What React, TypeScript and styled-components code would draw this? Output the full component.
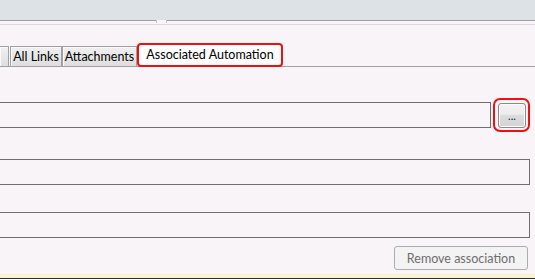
import styled, { createGlobalStyle } from "styled-components"

const GlobalStyle = createGlobalStyle`
  html, body {
    margin: 0;
    padding: 0;
  }
  body {
    background: #f8f4f7;
    font-family: Lato, "Liberation Sans", sans-serif;
    font-size: 12.5px;
    color: #000;
  }
`

const Page = styled.div`
  height: 279px;
  display: flex;
  flex-direction: column;
  overflow: hidden;
`

const TitleBand = styled.div`
  position: relative;
  height: 20px;
  flex-shrink: 0;
  background: #dce2e6;
  border-bottom: 1px solid #a0a0a0;
`

// little splitter notch that breaks the line under the title band
const Grip = styled.div`
  position: absolute;
  left: 156px;
  top: 20px;
  width: 9px;
  height: 3px;
  background: #f8f4f7;
  border-left: 1px solid #c4c4c8;
  border-right: 1px solid #c4c4c8;
`

const Rule = styled.div`
  height: 1px;
  flex-shrink: 0;
  margin-top: 3px;
  background: #d9d8dc;
`

const TabRow = styled.div`
  height: 41px;
  flex-shrink: 0;
  display: flex;
  align-items: flex-end;
  border-bottom: 1px solid #a0a0a0;
`

const Tab = styled.div<{ $w: number; $active?: boolean; $gap?: number; $clipped?: boolean }>`
  box-sizing: border-box;
  width: ${(p) => p.$w}px;
  margin-left: ${(p) => p.$gap ?? 0}px;
  display: flex;
  align-items: center;
  justify-content: center;
  white-space: nowrap;
  overflow: hidden;
  ${(p) =>
    p.$active
      ? `
    height: 24px;
    margin-bottom: -1px;
    background: #fdfdfd;
    border: 2px solid #ee1111;
    border-radius: 4px;
    padding-bottom: 2px;
  `
      : `
    height: 20px;
    background: linear-gradient(#f0f0f0, #dedede);
    border: 1px solid #a0a0a0;
    border-bottom: none;
    box-shadow: inset 1px 1px 0 #fafafa;
  `}
  ${(p) => (p.$clipped ? "border-left: none;" : "")}
`

const Form = styled.div`
  display: flex;
  flex-direction: column;
  padding-right: 5px;
`

const FieldRow = styled.div<{ $top: number }>`
  display: flex;
  align-items: center;
  margin-top: ${(p) => p.$top}px;
`

const TextBox = styled.div`
  flex: 1;
  box-sizing: border-box;
  height: 26px;
  border: 1px solid #6e6e6e;
  border-left: none;
`

const Highlight = styled.div`
  margin-left: 2px;
  box-sizing: border-box;
  width: 37px;
  height: 34px;
  padding: 3px 2px 2px 3px;
  border: 2px solid #ee1111;
  border-radius: 7px;
`

const BrowseButton = styled.div`
  box-sizing: border-box;
  width: 28px;
  height: 25px;
  border: 1px solid #8a8a8a;
  border-radius: 3px;
  background: linear-gradient(#f3f3f3 0%, #ececec 45%, #dcdcdc 50%, #d4d4d4 100%);
  box-shadow: inset 0 0 0 1px #fbfbfb;
  display: flex;
  align-items: center;
  justify-content: center;
  font-size: 11px;
  line-height: 1;
  padding-bottom: 1px;
  color: #202040;
`

const Actions = styled.div`
  display: flex;
  justify-content: flex-end;
  margin-top: 8px;
  padding-right: 2px;
`

const Button = styled.div`
  box-sizing: border-box;
  width: 134px;
  height: 24px;
  border: 1px solid #adadad;
  border-radius: 3px;
  background: #f4f3f4;
  color: #6d6d6d;
  display: flex;
  align-items: center;
  justify-content: center;
`

const Footer = styled.div`
  margin-top: auto;
  flex-shrink: 0;
  height: 4px;
  background: #fdf2cd;
  border-bottom: 1px solid #1c2d4b;
`

export default function App() {
  return (
    <Page>
      <GlobalStyle />
      <TitleBand>
        <Grip />
      </TitleBand>
      <Rule />
      <TabRow>
        <Tab $w={9} $clipped />
        <Tab $w={52} $gap={1}>All Links</Tab>
        <Tab $w={75}>Attachments</Tab>
        <Tab $w={146} $active>
          Associated Automation
        </Tab>
      </TabRow>
      <Form>
        <FieldRow $top={31}>
          <TextBox />
          <Highlight>
            <BrowseButton>...</BrowseButton>
          </Highlight>
        </FieldRow>
        <FieldRow $top={27}>
          <TextBox />
        </FieldRow>
        <FieldRow $top={27}>
          <TextBox />
        </FieldRow>
        <Actions>
          <Button>Remove association</Button>
        </Actions>
      </Form>
      <Footer />
    </Page>
  )
}
